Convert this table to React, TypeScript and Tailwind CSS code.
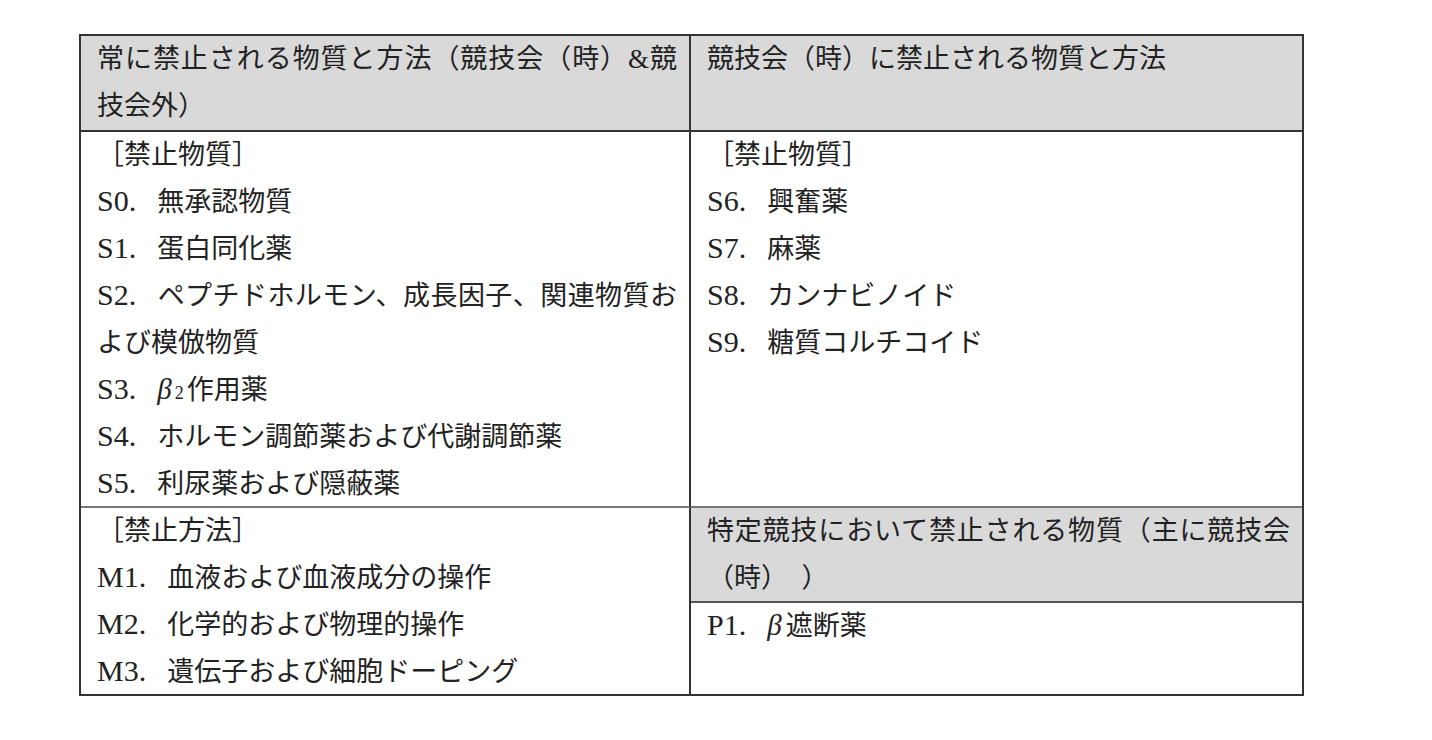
import React from 'react';

type Item = { label?: string; text: React.ReactNode };

const Beta = () => <span className="italic text-[29px] leading-none">β</span>;

const leftSubstances: Item[] = [
    { text: '［禁止物質］' },
    { label: 'S0.', text: '無承認物質' },
    { label: 'S1.', text: '蛋白同化薬' },
    { label: 'S2.', text: 'ペプチドホルモン、成長因子、関連物質および模倣物質' },
    {
        label: 'S3.',
        text: (
            <>
                <Beta />
                <span className="text-[18px] leading-none ml-[3px] mr-[3px]">2</span>作用薬
            </>
        ),
    },
    { label: 'S4.', text: 'ホルモン調節薬および代謝調節薬' },
    { label: 'S5.', text: '利尿薬および隠蔽薬' },
];

const leftMethods: Item[] = [
    { text: '［禁止方法］' },
    { label: 'M1.', text: '血液および血液成分の操作' },
    { label: 'M2.', text: '化学的および物理的操作' },
    { label: 'M3.', text: '遺伝子および細胞ドーピング' },
];

const rightSubstances: Item[] = [
    { text: '［禁止物質］' },
    { label: 'S6.', text: '興奮薬' },
    { label: 'S7.', text: '麻薬' },
    { label: 'S8.', text: 'カンナビノイド' },
    { label: 'S9.', text: '糖質コルチコイド' },
];

const specificSports: Item[] = [
    {
        label: 'P1.',
        text: (
            <>
                <Beta />
                <span className="ml-[4px]">遮断薬</span>
            </>
        ),
    },
];

const Lines: React.FC<{ items: Item[] }> = ({ items }) => (
    <>
        {items.map((item, i) => (
            <p key={i} className="text-justify">
                {item.label && (
                    <span className="text-[30px] leading-none mr-[21px]">{item.label}</span>
                )}
                {item.text}
            </p>
        ))}
    </>
);

const App: React.FC = () => {
    return (
        <div
            className="min-h-screen bg-white pt-[34px] text-[#222] text-[27px] leading-[47px] [text-spacing-trim:space-all]"
            style={{ fontFamily: '"Liberation Serif", "Noto Sans CJK JP", serif' }}
        >
            <div className="ml-[79px] w-[1225px] border-2 border-[#333] grid grid-cols-[610px_1fr]">
                {/* Header row */}
                <div className="h-[96px] bg-[#d9d9d9] border-r-2 border-b-2 border-[#333] pl-4 pr-3 text-justify">
                    常に禁止される物質と方法（競技会（時）&amp;競技会外）
                </div>
                <div className="h-[96px] bg-[#d9d9d9] border-b-2 border-[#333] pl-4 pr-3">
                    競技会（時）に禁止される物質と方法
                </div>

                {/* Substances */}
                <div className="h-[376px] border-r-2 border-b-2 border-r-[#333] border-b-[#777] pl-4 pr-3">
                    <Lines items={leftSubstances} />
                </div>
                <div className="h-[376px] border-b-2 border-[#777] pl-4 pr-3">
                    <Lines items={rightSubstances} />
                </div>

                {/* Methods / specific sports */}
                <div className="h-[186px] border-r-2 border-[#333] pl-4 pr-3">
                    <Lines items={leftMethods} />
                </div>
                <div className="h-[186px] flex flex-col">
                    <div className="h-[95px] bg-[#d9d9d9] border-b-2 border-[#555] pl-4 pr-3 text-justify">
                        特定競技において禁止される物質（主に競技会（時）{'\u2002'}）
                    </div>
                    <div className="flex-1 pl-4 pr-3">
                        <Lines items={specificSports} />
                    </div>
                </div>
            </div>
        </div>
    );
};

export default App;
